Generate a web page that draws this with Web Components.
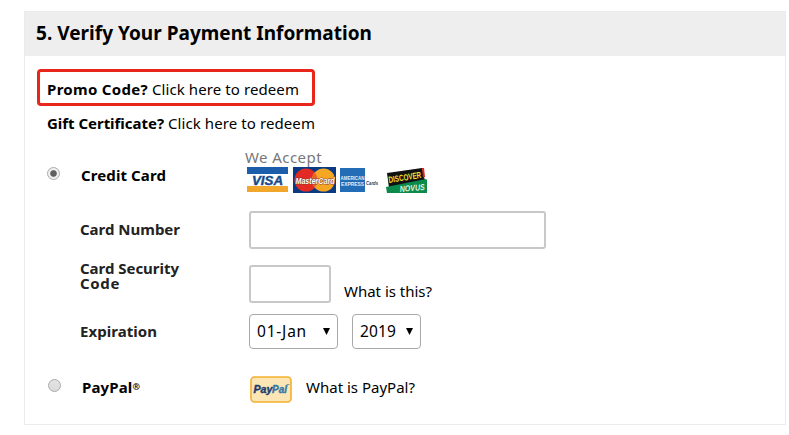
<!DOCTYPE html>
<html lang="en">
<head>
<meta charset="utf-8">
<title>Verify Your Payment Information</title>
<style>
	body {
		margin: 0;
		padding: 11px 3px 0 24px;
		background: #fff;
		color: #000;
		font: 15px/20px "Noto Sans", "Liberation Sans", sans-serif;
	}
	small {
		font-size: 9px;
		line-height: 1;
		vertical-align: 3px;
	}
</style>
</head>
<body>
<payment-panel>
	<tracked-text slot="title" width="336">5. Verify Your Payment Information</tracked-text>
	<redeem-line highlight>
		<tracked-text slot="question" width="101">Promo Code?</tracked-text>
		<tracked-text width="147">Click here to redeem</tracked-text>
	</redeem-line>
	<redeem-line>
		<tracked-text slot="question" width="117">Gift Certificate?</tracked-text>
		<tracked-text width="147">Click here to redeem</tracked-text>
	</redeem-line>
	<payment-method checked style="--height: 69px; --label-top: 23px; --radio-top: 25px; --content-top: 5px">
		<tracked-text slot="label" width="85">Credit Card</tracked-text>
		<accepted-cards></accepted-cards>
	</payment-method>
	<form-row style="--height: 54px; --label-top: 8px">
		<tracked-text slot="label" width="100">Card Number</tracked-text>
		<text-box style="--width: 297px"></text-box>
	</form-row>
	<form-row style="--height: 49px; --label-top: -4px; --label-line: 15px; --side-top: 16px">
		<tracked-text slot="label" width="99">Card Security</tracked-text>
		<tracked-text slot="label" width="40">Code</tracked-text>
		<text-box style="--width: 82px"></text-box>
		<tracked-text slot="side" width="88">What is this?</tracked-text>
	</form-row>
	<form-row style="--height: 60px; --label-top: 7px">
		<tracked-text slot="label" width="77">Expiration</tracked-text>
		<select-box style="--width: 89px"><tracked-text width="50">01-Jan</tracked-text></select-box>
		<select-box style="--width: 69px"><tracked-text width="36">2019</tracked-text></select-box>
	</form-row>
	<payment-method style="--height: 48px; --label-top: 3px; --radio-top: 5px; --content-top: 3px; --label-left: 1px; --radio-left: 11px">
		<tracked-text slot="label" width="58">PayPal<small>®</small></tracked-text>
		<paypal-info><tracked-text width="109">What is PayPal?</tracked-text></paypal-info>
	</payment-method>
</payment-panel>

<script>
// Text set to a given width by spreading the difference over its letters
class TrackedText extends HTMLElement {
	connectedCallback() {
		const root = this.attachShadow({ mode: 'open' });
		root.innerHTML = `
      <style>
        :host { display: inline-block; white-space: nowrap; }
        span { display: inline-block; }
      </style>
      <span><slot></slot></span>
    `;
		const target = Number(this.getAttribute('width'));
		const natural = root.querySelector('span').getBoundingClientRect().width;
		const tracking = (target - natural) / this.textContent.length;
		this.style.letterSpacing = `${tracking.toFixed(3)}px`;
	}
}

class PaymentPanel extends HTMLElement {
	connectedCallback() {
		this.attachShadow({ mode: 'open' }).innerHTML = `
      <style>
        :host {
          display: block;
          box-sizing: border-box;
          height: 414px;
          border: 1px solid #ebebeb;
        }
        header {
          height: 44px;
          box-sizing: border-box;
          padding: 9px 11px;
          background: #eee;
          font-size: 19px;
          line-height: 25px;
          font-weight: 700;
        }
        main { padding: 13px 12px 0; }
      </style>
      <header><slot name="title"></slot></header>
      <main><slot></slot></main>
    `;
	}
}

class RedeemLine extends HTMLElement {
	connectedCallback() {
		this.attachShadow({ mode: 'open' }).innerHTML = `
      <style>
        :host {
          display: flex;
          gap: 4px;
          box-sizing: border-box;
          height: 36px;
          padding: 7px 10px;
        }
        :host([highlight]) {
          width: 278px;
          height: 37px;
          padding: 7px 7px;
          border: 3px solid #e8261c;
          border-radius: 4px;
        }
        b { font-weight: 700; }
      </style>
      <b><slot name="question"></slot></b>
      <slot></slot>
    `;
	}
}

class PaymentMethod extends HTMLElement {
	connectedCallback() {
		this.attachShadow({ mode: 'open' }).innerHTML = `
      <style>
        :host {
          display: grid;
          grid-template-columns: 44px 165px 1fr;
          align-items: start;
          height: var(--height);
        }
        i {
          box-sizing: border-box;
          width: 13px;
          height: 13px;
          margin: var(--radio-top) 0 0 var(--radio-left, 10px);
          border: 1px solid #aaa;
          border-radius: 50%;
          background: linear-gradient(#e4e4e4, #dadada);
        }
        :host([checked]) i {
          background: radial-gradient(circle, #606060 0 2.8px, #f0f0f0 3.8px);
        }
        b { margin: var(--label-top) 0 0 var(--label-left, 0); }
        div { margin-top: var(--content-top); }
      </style>
      <i></i>
      <b><slot name="label"></slot></b>
      <div><slot></slot></div>
    `;
	}
}

class FormRow extends HTMLElement {
	connectedCallback() {
		this.attachShadow({ mode: 'open' }).innerHTML = `
      <style>
        :host {
          display: grid;
          grid-template-columns: 169px auto 1fr;
          align-items: start;
          height: var(--height);
          padding-left: 43px;
        }
        b {
          display: flex;
          flex-direction: column;
          margin-top: var(--label-top);
          line-height: var(--label-line, 20px);
          color: #222;
        }
        div { display: flex; gap: 14px; }
        p { margin: var(--side-top, 0) 0 0 13px; }
      </style>
      <b><slot name="label"></slot></b>
      <div><slot></slot></div>
      <p><slot name="side"></slot></p>
    `;
	}
}

class TextBox extends HTMLElement {
	connectedCallback() {
		this.attachShadow({ mode: 'open' }).innerHTML = `
      <style>
        :host {
          display: block;
          box-sizing: border-box;
          width: var(--width);
          height: 38px;
          border: 2px solid #c8c8c8;
          border-radius: 3px;
        }
      </style>
    `;
	}
}

class SelectBox extends HTMLElement {
	connectedCallback() {
		this.attachShadow({ mode: 'open' }).innerHTML = `
      <style>
        :host {
          display: flex;
          align-items: center;
          justify-content: space-between;
          box-sizing: border-box;
          width: var(--width);
          height: 35px;
          padding: 0 7px 1px;
          border: 1px solid #a9a9a9;
          border-radius: 4px;
          font-size: 15.5px;
        }
        svg { display: block; }
      </style>
      <slot></slot>
      <svg width="7" height="7"><path d="M0 0h7L3.5 7z"/></svg>
    `;
	}
}

class AcceptedCards extends HTMLElement {
	connectedCallback() {
		this.attachShadow({ mode: 'open' }).innerHTML = `
      <style>
        :host { display: block; margin-left: -1px; color: #777; }
        svg { display: block; overflow: visible; margin-top: -1px; }
        text { font-family: "Liberation Sans", sans-serif; font-weight: 700; font-style: italic; }
        .upright { font-style: normal; }
      </style>
      <tracked-text width="77">We Accept</tracked-text>
      <svg width="183" height="28" viewBox="0 0 183 28">
        <g>
          <path fill="#1b5dab" d="M2 1h41v7H2z"/>
          <path fill="#f0a72c" d="M2 20h41v6H2z"/>
          <text x="7" y="18.5" font-size="12.5" textLength="31" lengthAdjust="spacingAndGlyphs" fill="#164a8c" stroke="#164a8c" stroke-width=".4">VISA</text>
        </g>
        <g>
          <path fill="#0b3a82" d="M48 1h43v26H48z"/>
          <circle cx="61" cy="14" r="11.5" fill="#e32b24"/>
          <circle cx="78.5" cy="14" r="11.5" fill="#f5a623"/>
          <path fill="#e8632a" d="M69.7 6.5a11.5 11.5 0 0 1 0 15 11.5 11.5 0 0 1 0-15z"/>
          <text x="50.5" y="17.5" font-size="9" textLength="39" lengthAdjust="spacingAndGlyphs" fill="#fff" stroke="#8a3a35" stroke-width="1" paint-order="stroke">MasterCard</text>
        </g>
        <g>
          <path fill="#236db6" d="M95 2h25v24H95z"/>
          <text class="upright" x="95.5" y="14" font-size="5.5" textLength="24" lengthAdjust="spacingAndGlyphs" fill="#e1edf8">AMERICAN</text>
          <text class="upright" x="96" y="20" font-size="5.5" textLength="23" lengthAdjust="spacingAndGlyphs" fill="#e1edf8">EXPRESS</text>
          <text x="121" y="19" font-size="5.5" textLength="12" lengthAdjust="spacingAndGlyphs" fill="#263b59">Cards</text>
        </g>
        <g>
          <path fill="#111" d="M142 7l35-5 3 13-36 7z"/>
          <path fill="#0b8a4c" d="M141 21l40-8 1 1v13h-40z"/>
          <path fill="#d7281f" d="M177 2h2l1 9-2 .5z"/>
          <text class="upright" transform="translate(144 17) rotate(-9)" font-size="9" textLength="33" lengthAdjust="spacingAndGlyphs" fill="#f4df2c">DISCOVER</text>
          <text transform="translate(155 26) rotate(-5)" font-size="8.5" textLength="25" lengthAdjust="spacingAndGlyphs" fill="#dcf0df">NOVUS</text>
        </g>
      </svg>
    `;
	}
}

class PaypalInfo extends HTMLElement {
	connectedCallback() {
		this.attachShadow({ mode: 'open' }).innerHTML = `
      <style>
        :host { display: flex; align-items: flex-start; gap: 14px; margin-left: 4px; }
        svg { display: block; margin-top: -1px; }
        text {
          font-family: "Liberation Sans", sans-serif;
          font-size: 10.5px;
          font-weight: 700;
          font-style: italic;
          stroke-width: .4px;
        }
      </style>
      <svg width="42" height="27" viewBox="0 0 42 27">
        <rect x="1" y="1" width="40" height="25" rx="3.5" fill="#fde6b6" stroke="#f3b02e" stroke-width="1.6"/>
        <text x="3.5" y="16.5" textLength="19" lengthAdjust="spacingAndGlyphs" fill="#1d3b6c" stroke="#1d3b6c">Pay</text>
        <text x="22" y="16.5" textLength="15" lengthAdjust="spacingAndGlyphs" fill="#3477a8" stroke="#3477a8">Pal</text>
        <path d="M37 8.5h2.5" stroke="#7799b3"/>
      </svg>
      <slot></slot>
    `;
	}
}

customElements.define('payment-panel', PaymentPanel);
customElements.define('redeem-line', RedeemLine);
customElements.define('payment-method', PaymentMethod);
customElements.define('form-row', FormRow);
customElements.define('text-box', TextBox);
customElements.define('select-box', SelectBox);
customElements.define('accepted-cards', AcceptedCards);
customElements.define('paypal-info', PaypalInfo);
// Last, so that the text is measured in its final font
customElements.define('tracked-text', TrackedText);
</script>
</body>
</html>
